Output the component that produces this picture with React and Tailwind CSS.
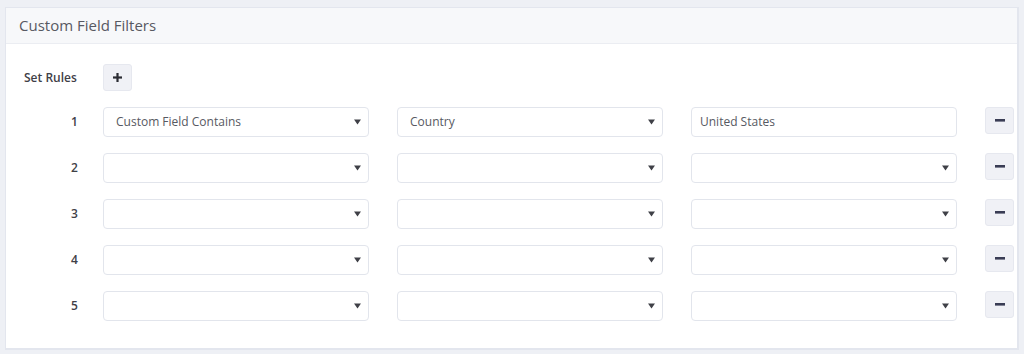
import React from "react";

const Caret = () => (
  <svg width="7" height="6" viewBox="0 0 7 6" className="absolute right-[7px] top-1/2 -translate-y-1/2">
    <path d="M0 0.5 H7 L3.5 5.5 Z" fill="#3f4047" />
  </svg>
);

const Select = ({ value }) => (
  <div className="relative w-[266px] h-[30px] shrink-0 rounded-[4px] border border-[#e2e5ec] bg-white flex items-center pl-[12px] text-[12px] text-[#575962]">
    {value}
    <Caret />
  </div>
);

const Input = ({ value }) => (
  <div className="w-[266px] h-[30px] shrink-0 rounded-[4px] border border-[#e2e5ec] bg-white flex items-center pl-[8px] text-[12px] text-[#575962]">
    {value}
  </div>
);

const IconBtn = ({ plus }) => (
  <div className="w-[29px] h-[27px] shrink-0 rounded-[3px] border border-[#e6e8ef] bg-[#f0f1f6] flex items-center justify-center">
    {plus ? (
      <svg width="9" height="9" viewBox="0 0 9 9">
        <rect x="3.4" y="0" width="2.2" height="9" fill="#2b2c33" />
        <rect x="0" y="3.4" width="9" height="2.2" fill="#2b2c33" />
      </svg>
    ) : (
      <svg width="10" height="3" viewBox="0 0 10 3">
        <rect x="0" y="0" width="10" height="2.6" fill="#3a3d55" />
      </svg>
    )}
  </div>
);

const rows = [
  { n: 1, a: "Custom Field Contains", b: "Country", c: "United States", input: true },
  { n: 2 },
  { n: 3 },
  { n: 4 },
  { n: 5 },
];

export default function App() {
  return (
    <div
      className="w-[1024px] h-[354px] bg-[#eef0f5] pt-[7px] pl-[5px] pr-[5px]"
      style={{ fontFamily: '"Open Sans", "Liberation Sans", sans-serif' }}
    >
      <div className="w-[1014px] h-[343px] bg-white border border-[#e3e6ee] border-r-2 border-b-2">
        <div className="h-[36px] bg-[#f7f8fa] border-b border-[#ebedf2] flex items-center pl-[13px] text-[15px] text-[#575962]">
          Custom Field Filters
        </div>
        <div className="pt-[20px] pl-[18px]">
          <div className="flex items-center">
            <div className="w-[79px] text-[12px] font-semibold text-[#3f4047]">Set Rules</div>
            <IconBtn plus />
          </div>
          <div className="mt-[16px] flex flex-col gap-[16px]">
            {rows.map((r) => (
              <div key={r.n} className="flex items-center">
                <div className="w-[79px] pl-[47px] text-[12px] font-semibold text-[#3f4047]">{r.n}</div>
                <Select value={r.a} />
                <div className="w-[28px]" />
                <Select value={r.b} />
                <div className="w-[28px]" />
                {r.input ? <Input value={r.c} /> : <Select />}
                <div className="w-[28px]" />
                <div className="-mt-[3px]">
                  <IconBtn />
                </div>
              </div>
            ))}
          </div>
        </div>
      </div>
    </div>
  );
}
